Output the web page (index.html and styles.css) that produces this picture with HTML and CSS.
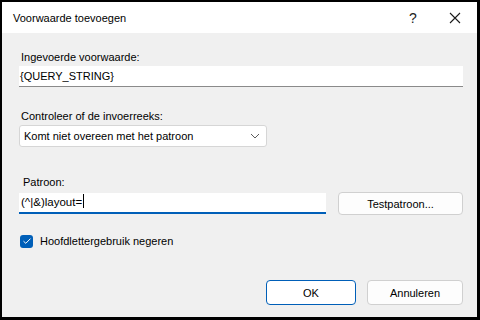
FILE: index.html
```html
<!DOCTYPE html>
<html lang="nl">
<head>
    <meta charset="UTF-8">
    <title>Voorwaarde toevoegen</title>
    <link rel="stylesheet" href="styles.css">
</head>
<body>
    <div class="window">
        <div class="titlebar">
            <span class="title">Voorwaarde toevoegen</span>
            <span class="help">?</span>
            <span class="close">
                <svg width="12" height="12" viewBox="0 0 12 12"><path d="M1 1L11 11M11 1L1 11" stroke="#1a1a1a" stroke-width="1.1" fill="none"/></svg>
            </span>
        </div>
        <div class="content">
            <label class="lbl">Ingevoerde voorwaarde:</label>
            <div class="field">{QUERY_STRING}</div>

            <label class="lbl lbl-check">Controleer of de invoerreeks:</label>
            <div class="select">
                <span>Komt niet overeen met het patroon</span>
                <svg width="10" height="6" viewBox="0 0 10 6"><path d="M1 1L5 5L9 1" stroke="#5c5c5c" stroke-width="1" fill="none"/></svg>
            </div>

            <label class="lbl lbl-pattern">Patroon:</label>
            <div class="pattern-row">
                <div class="field field-active">(^|&amp;)layout=<span class="caret"></span></div>
                <button class="btn btn-test">Testpatroon...</button>
            </div>

            <div class="check-row">
                <span class="checkbox">
                    <svg width="10" height="8" viewBox="0 0 10 8"><path d="M1.5 4.2L3.8 6.3L8.5 1.6" stroke="#fff" stroke-width="1" fill="none"/></svg>
                </span>
                <span>Hoofdlettergebruik negeren</span>
            </div>

            <div class="actions">
                <button class="btn btn-ok">OK</button>
                <button class="btn btn-cancel">Annuleren</button>
            </div>
        </div>
    </div>
</body>
</html>
```
FILE: styles.css
```css
body {
    margin: 0;
    background: #000;
    font-family: "Liberation Sans", Arial, sans-serif;
    font-size: 11px;
    color: #000;
}

.window {
    margin: 2px 3px 3px 2px;
    width: 475px;
    height: 315px;
    background: #f0f0f0;
    display: flex;
    flex-direction: column;
}

.titlebar {
    height: 31px;
    background: #fff;
    display: flex;
    align-items: center;
    padding-left: 11px;
}

.title {
    flex: 1;
}

.help {
    width: 20px;
    text-align: center;
    font-size: 14px;
    color: #222;
    margin-right: 26px;
}

.close {
    width: 12px;
    height: 12px;
    display: flex;
    margin-right: 16px;
}

.content {
    padding: 16px 14px 0 17px;
    display: flex;
    flex-direction: column;
}

.lbl {
    display: block;
    line-height: 16px;
    padding-left: 2px;
}

.lbl-check {
    margin-top: 21px;
}

.lbl-pattern {
    margin-top: 27px;
    padding-left: 4px;
}

.field {
    box-sizing: border-box;
    height: 21px;
    margin-top: 1px;
    background: #fff;
    border-bottom: 1px solid #8a8a8a;
    padding-left: 1px;
    line-height: 20px;
    white-space: nowrap;
}

.select {
    box-sizing: border-box;
    width: 248px;
    height: 22px;
    margin-top: 1px;
    background: #fff;
    border: 1px solid #d6d6d6;
    border-radius: 3px;
    display: flex;
    align-items: center;
    justify-content: space-between;
    padding: 0 6px 0 4px;
}

.pattern-row {
    display: flex;
    align-items: center;
    height: 23px;
    margin-top: 2px;
}

.field-active {
    width: 307px;
    margin-top: 0;
    border-bottom: 2px solid #005fb8;
    line-height: 19px;
    padding-left: 2px;
    font-size: 11.5px;
}

.caret {
    display: inline-block;
    width: 1px;
    height: 14px;
    background: #000;
    vertical-align: -2px;
    margin-left: 1px;
}

.btn {
    box-sizing: border-box;
    font: inherit;
    color: #000;
    background: #fdfdfd;
    border: 1px solid #d0d0d0;
    border-radius: 4px;
    padding: 0;
}

.btn-test {
    width: 125px;
    height: 23px;
    margin-left: 12px;
}

.check-row {
    display: flex;
    align-items: center;
    margin-top: 19px;
    height: 14px;
    padding-left: 1px;
}

.checkbox {
    box-sizing: border-box;
    width: 13px;
    height: 13px;
    background: #005fb8;
    border-radius: 3px;
    display: flex;
    align-items: center;
    justify-content: center;
    margin-right: 7px;
}

.actions {
    display: flex;
    justify-content: flex-end;
    margin-top: 32px;
    padding-right: 0;
}

.actions .btn {
    height: 25px;
}

.btn-ok {
    width: 90px;
    border-color: #005fb8;
    background: #fff;
}

.btn-cancel {
    width: 96px;
    margin-left: 11px;
}
```
